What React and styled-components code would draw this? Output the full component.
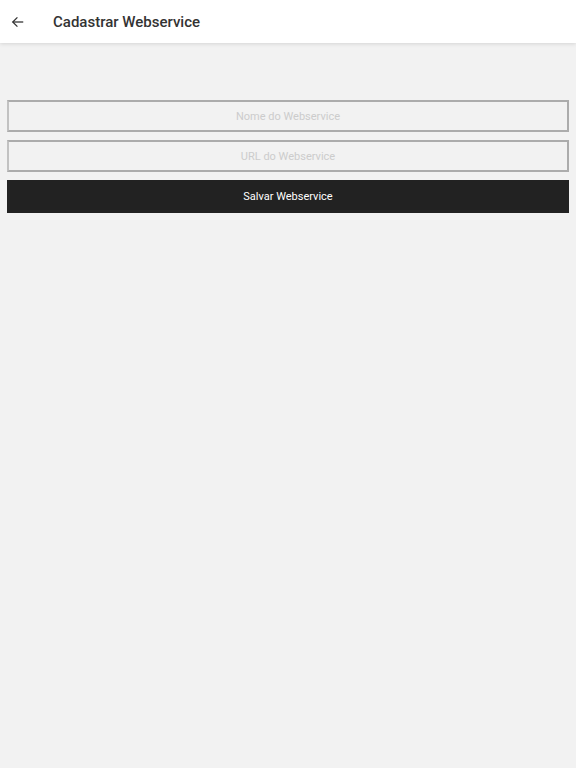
import React from "react";
import styled, { createGlobalStyle } from "styled-components";

const GlobalStyle = createGlobalStyle`
  html, body {
    margin: 0;
    padding: 0;
    background-color: #f2f2f2;
    font-family: Roboto, "Liberation Sans", sans-serif;
  }
`;

const Page = styled.div`
  min-height: 768px;
  background-color: #f2f2f2;
`;

const Toolbar = styled.header`
  height: 43px;
  display: flex;
  align-items: center;
  background-color: #ffffff;
  box-shadow: 0 1px 4px rgba(0, 0, 0, 0.12);

  h1 {
    margin: 0;
    font-size: 15px;
    font-weight: 500;
    color: #333333;
  }
`;

const BackButton = styled.button`
  width: 53px;
  height: 43px;
  padding: 0 0 0 11px;
  border: none;
  background: none;
  display: flex;
  align-items: center;
  color: #333333;
`;

const Form = styled.form`
  display: flex;
  flex-direction: column;
  gap: 8px;
  padding: 57px 7px 0 7px;
`;

const Field = styled.input`
  height: 32px;
  box-sizing: border-box;
  border: 2px solid #acacac;
  border-left-color: #c2c2c2;
  background-color: #f2f2f2;
  text-align: center;
  font-family: Roboto, "Liberation Sans", sans-serif;
  font-size: 11px;
  color: #333333;
  outline: none;

  &::placeholder {
    color: #cccccc;
  }
`;

const SubmitButton = styled.button`
  height: 33px;
  border: none;
  background-color: #222222;
  color: #ffffff;
  font-family: Roboto, "Liberation Sans", sans-serif;
  font-size: 11px;
`;

const App = () => {
  return (
    <Page>
      <GlobalStyle />
      <Toolbar>
        <BackButton type="button" aria-label="Voltar">
          <svg width="14" height="14" viewBox="0 0 24 24" fill="none" stroke="currentColor" strokeWidth="2.2">
            <path d="M21 12H3" />
            <path d="M11 4l-8 8 8 8" />
          </svg>
        </BackButton>
        <h1>Cadastrar Webservice</h1>
      </Toolbar>
      <Form onSubmit={(e) => e.preventDefault()}>
        <Field placeholder="Nome do Webservice" />
        <Field placeholder="URL do Webservice" />
        <SubmitButton type="submit">Salvar Webservice</SubmitButton>
      </Form>
    </Page>
  );
};

export default App;
